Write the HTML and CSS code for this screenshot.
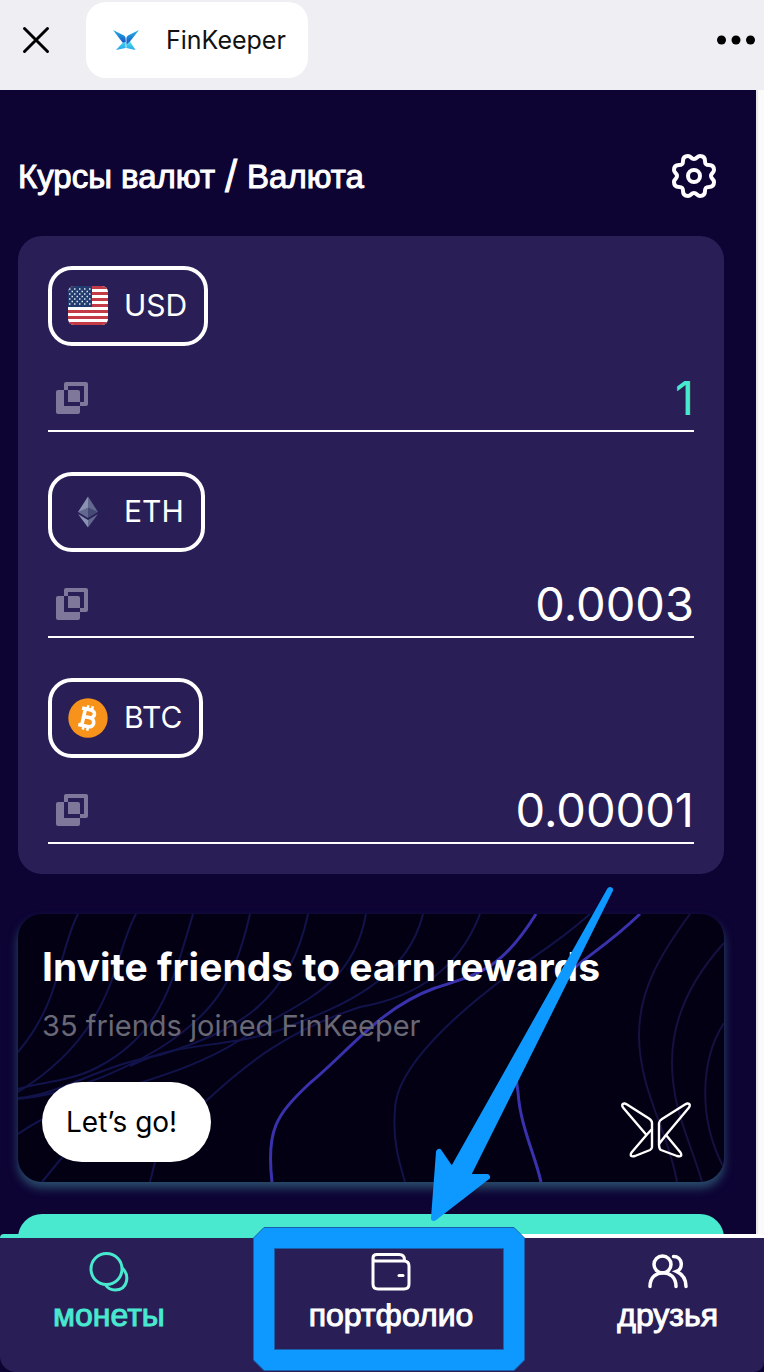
FILE: index.html
```html
<!DOCTYPE html>
<html lang="ru">
<head>
<meta charset="utf-8">
<meta name="viewport" content="width=device-width, initial-scale=1">
<title>FinKeeper</title>
<link rel="stylesheet" href="styles.css">
</head>
<body>
<svg width="0" height="0" class="defs" aria-hidden="true">
  <defs>
    <linearGradient id="wing-top" x1="0" y1="0" x2="0" y2="1">
      <stop offset="0" stop-color="#25b4ea"/><stop offset="1" stop-color="#1756c4"/>
    </linearGradient>
    <linearGradient id="wing-bottom" x1="0" y1="0" x2="0" y2="1">
      <stop offset="0" stop-color="#4fe3f2"/><stop offset="1" stop-color="#25a3ea"/>
    </linearGradient>
    <symbol id="copy" viewBox="0 0 32 32">
      <path fill-rule="evenodd" d="M10 0H30a2 2 0 0 1 2 2V22a2 2 0 0 1-2 2H24V20H28V4H12V8H8V2a2 2 0 0 1 2-2Z"/>
      <path d="M2 8H8V24H24V30a2 2 0 0 1-2 2H2a2 2 0 0 1-2-2V10a2 2 0 0 1 2-2Z"/>
      <path d="M12 8H22a2 2 0 0 1 2 2V20H12Z"/>
    </symbol>
  </defs>
</svg>

<div class="app">
  <header class="topbar">
    <button class="icon-button" type="button" aria-label="Close">
      <svg width="28" height="28" viewBox="0 0 28 28" fill="none" stroke="#000" stroke-width="3" stroke-linecap="round"><path d="M2.500 2.500 25.500 25.500M25.500 2.500 2.500 25.500"/></svg>
    </button>
    <button class="app-tab" type="button">
      <svg width="28" height="22" viewBox="0 0 28 22" aria-hidden="true">
        <path fill="url(#wing-bottom)" d="M13.600 10.500V19L4 21Z"/>
        <path fill="url(#wing-bottom)" d="M14.400 15 18 12.500 23.500 21 14.400 19Z"/>
        <path fill="url(#wing-top)" d="M1 1 12 6.500Q13.600 7.500 13.600 9V13L10.500 13.500Z"/>
        <path fill="url(#wing-top)" d="M27 1 16 6.500Q14.400 7.500 14.400 9V15.500L18 12.500Z"/>
      </svg>
      <span>FinKeeper</span>
    </button>
    <button class="icon-button more" type="button" aria-label="More">
      <svg width="38" height="10" viewBox="0 0 38 10"><circle cx="4.500" cy="5" r="4.500"/><circle cx="19" cy="5" r="4.500"/><circle cx="33.500" cy="5" r="4.500"/></svg>
    </button>
  </header>

  <main class="screen">
    <div class="heading">
      <h1>Курсы валют <span class="slash">/</span> Валюта</h1>
      <button class="icon-button" type="button" aria-label="Настройки">
        <svg width="44" height="44" viewBox="-22 -22 44 44" fill="none" stroke="#fff" stroke-width="4" stroke-linejoin="round">
          <circle r="6"/>
          <path d="M0-17C3-17 3-20 6-20C10-20 11-18 11-15C11-12 12-11 15-11C18-11 20-10 20-6C20-3 17-3 17 0C17 3 20 3 20 6C20 10 18 11 15 11C12 11 11 12 11 15C11 18 10 20 6 20C3 20 3 17 0 17C-3 17-3 20-6 20C-10 20-11 18-11 15C-11 12-12 11-15 11C-18 11-20 10-20 6C-20 3-17 3-17 0C-17-3-20-3-20-6C-20-10-18-11-15-11C-12-11-11-12-11-15C-11-18-10-20-6-20C-3-20-3-17 0-17Z"/>
        </svg>
      </button>
    </div>

    <section class="rates">
      <div class="rate">
        <button class="coin" type="button">
          <svg width="40" height="40" viewBox="0 0 40 40" aria-hidden="true">
            <clipPath id="flag"><rect width="40" height="39" rx="6"/></clipPath>
            <g clip-path="url(#flag)">
              <rect width="40" height="39" fill="#fff"/>
              <path stroke="#c23b46" stroke-width="3" d="M0 1.500H40M0 7.500H40M0 13.500H40M0 19.500H40M0 25.500H40M0 31.500H40M0 37.500H40"/>
              <rect width="24" height="21" fill="#223c70"/>
              <path stroke="#dfe6ee" stroke-width="1.500" stroke-dasharray="1.500 3.500" d="M1 3H23M1 8H23M1 13H23M1 18H23M3.500 5.500H23M3.500 10.500H23M3.500 15.500H23"/>
            </g>
          </svg>
          <span>USD</span>
        </button>
        <div class="amount">
          <button class="copy" type="button" aria-label="Copy USD"><svg width="32" height="32"><use href="#copy"/></svg></button>
          <input class="value active" type="text" value="1" aria-label="USD">
        </div>
      </div>
      <div class="rate">
        <button class="coin" type="button">
          <svg width="40" height="40" viewBox="0 0 40 40" aria-hidden="true">
            <path fill="#8a92b2" d="M20 4.500V20.500L10 20Z"/><path fill="#62688f" d="M20 4.500V20.500L30 20Z"/>
            <path fill="#62688f" d="M20 15.500V26L10 20Z"/><path fill="#454a75" d="M20 15.500V26L30 20Z"/>
            <path fill="#8a92b2" d="M10 22 20 28V35.500Z"/><path fill="#62688f" d="M30 22 20 28V35.500Z"/>
          </svg>
          <span>ETH</span>
        </button>
        <div class="amount">
          <button class="copy" type="button" aria-label="Copy ETH"><svg width="32" height="32"><use href="#copy"/></svg></button>
          <input class="value" type="text" value="0.0003" aria-label="ETH">
        </div>
      </div>
      <div class="rate">
        <button class="coin" type="button">
          <svg width="40" height="40" viewBox="0 0 40 40" aria-hidden="true">
            <circle cx="20" cy="20" r="19.700" fill="#f7931a"/>
            <g transform="rotate(13 20 20)" fill="none" stroke="#fff">
              <path stroke-width="3.600" d="M15.500 11.500V28.500M12 11.500H21C27 11.500 27 19.300 21 19.300H16M21 19.300C28.500 19.300 28.500 28.500 21.500 28.500H12"/>
              <path stroke-width="2.600" d="M17.500 7.500V12M22 7.500V12M17.500 28V32.500M22 28V32.500"/>
            </g>
          </svg>
          <span>BTC</span>
        </button>
        <div class="amount">
          <button class="copy" type="button" aria-label="Copy BTC"><svg width="32" height="32"><use href="#copy"/></svg></button>
          <input class="value" type="text" value="0.00001" aria-label="BTC">
        </div>
      </div>
    </section>

    <section class="invite">
      <svg class="waves" viewBox="18 914 706 268" preserveAspectRatio="none" fill="none" aria-hidden="true">
        <g stroke="#12134a" stroke-width="2">
          <path d="M78 914C58 952 62 1000 18 1052"/>
          <path d="M136 914C112 956 118 1030 18 1092"/>
          <path d="M193 914C172 985 160 1035 98 1067C70 1082 40 1082 18 1089"/>
          <path d="M250 914C236 975 220 1010 160 1048C110 1078 60 1095 18 1099"/>
          <path d="M308 914C290 1000 240 1030 160 1055C100 1065 60 1095 18 1098"/>
          <path d="M366 914C352 990 300 1000 240 1040C170 1085 80 1090 18 1134"/>
          <path d="M423 914C406 985 330 1010 280 1030C220 1050 180 1040 130 1066"/>
          <path d="M480 914C455 980 400 1000 360 1007C290 1030 250 1060 205 1102C150 1130 130 1090 60 1160L42 1182"/>
          <path d="M590 914C555 945 535 955 515 970C460 1010 395 1067 395 1110C392 1140 400 1165 405 1182"/>
          <path d="M155 1162L150 1182"/>
        </g>
        <g stroke="#171041" stroke-width="2">
          <path d="M690 914C660 955 639 990 639 1035C639 1090 668 1130 677 1182"/>
          <path d="M724 943C695 975 672 1015 672 1062C672 1110 690 1140 702 1182"/>
          <path d="M724 1023C700 1060 698 1120 724 1168"/>
        </g>
        <g stroke="#3a32ad" stroke-width="3">
          <path d="M536 914C500 972 475 975 435 988C380 1008 350 1050 310 1083C276 1115 266 1130 272 1182"/>
          <path d="M640 914C590 962 570 960 545 1005C510 1060 515 1070 518 1092C520 1125 535 1155 541 1182"/>
        </g>
      </svg>
      <div class="invite-body">
        <h2>Invite friends to earn rewards</h2>
        <p>35 friends joined FinKeeper</p>
        <div class="invite-foot">
          <button class="go" type="button">Let’s go!</button>
          <svg width="72" height="56" viewBox="0 0 72 56" fill="none" stroke="#fff" stroke-width="2.400" stroke-linejoin="round" aria-hidden="true">
            <path d="M4 1.500Q1 2 3 5.500L26.500 33 32 27V21Q32 18.500 29 16.500L7 2.500Q5 1.300 4 1.500Z"/>
            <path d="M32 27V45Q32 47 30 48L15 54Q9 55.500 11.500 50.500L26.500 33"/>
            <path d="M68 1.500Q71 2 69 5.500L46 33 39 42V21Q39 19 42 17L65 2.500Q67 1.300 68 1.500Z"/>
            <path d="M39 42Q39 47 41 48L57 54Q63 55.500 60.500 50.500L46 33"/>
          </svg>
        </div>
      </div>
    </section>

    <div class="promo"></div>
  </main>

  <nav class="tabbar">
    <a class="tab current" href="#coins">
      <svg width="40" height="40" viewBox="0 0 40 40" fill="none" stroke="currentColor" stroke-width="3" aria-hidden="true">
        <circle cx="17.500" cy="17" r="15.500"/><path d="M33 16C41 23 39 38 26 38C22 38 19 36.500 16.500 33"/>
      </svg>
      <span>монеты</span>
    </a>
    <a class="tab" href="#portfolio">
      <svg width="40" height="40" viewBox="0 0 40 40" fill="none" stroke="currentColor" stroke-width="3" stroke-linecap="round" aria-hidden="true">
        <path d="M2 6V32Q2 37 7 37H33Q38 37 38 32V14Q38 9 33 9H5Q2 9 2 6Q2 2.500 6 2.500H28Q33.500 2.500 33.500 8"/><path d="M28 23.500H32"/>
      </svg>
      <span>портфолио</span>
      <svg class="pointer" width="460" height="492" viewBox="161 880 460 492" fill="#0d99ff" aria-hidden="true">
        <path fill-rule="evenodd" stroke="#1a5fae" stroke-width="1" d="M264 1227.500H514L524.500 1238V1360L514 1370.500H264L253.500 1360V1238ZM274.500 1248.500V1349.500H503.500V1248.500Z"/>
        <path stroke="#0d99ff" stroke-width="6" stroke-linejoin="round" d="M610 890 452 1171 439 1152 434 1218 487 1177 467 1177Z"/>
      </svg>
    </a>
    <a class="tab" href="#friends">
      <svg width="40" height="40" viewBox="0 0 40 40" fill="none" stroke="currentColor" stroke-width="3.500" stroke-linecap="round" aria-hidden="true">
        <circle cx="14.500" cy="12.500" r="8.500"/><path d="M2 34.500C2 16 28 16 28 34.500"/><path d="M25.500 4.500C35 4.500 35.500 17 28.500 19.500C34 22 38 27 38 34.500"/>
      </svg>
      <span>друзья</span>
    </a>
  </nav>
</div>
</body>
</html>
```
FILE: styles.css
```css
* { box-sizing: border-box; }

body {
  margin: 0;
  background: #0d0434;
  color: #fff;
  font-family: "Liberation Sans", sans-serif;
}

button {
  font: inherit;
  border: 0;
  padding: 0;
  background: none;
  color: inherit;
  cursor: pointer;
}

svg { display: block; flex: none; }
.defs { position: absolute; }

.app {
  display: flex;
  flex-direction: column;
  height: 100vh;
}

.topbar {
  flex: none;
  display: flex;
  align-items: flex-start;
  height: 90px;
  padding: 2px 9px 0 22px;
  background: #efeef3;
}
.topbar .icon-button {
  display: flex;
  align-items: center;
  height: 76px;
}
.topbar .more { margin-left: auto; }

.app-tab {
  display: flex;
  align-items: center;
  gap: 26px;
  height: 76px;
  margin-left: 36px;
  padding: 0 22px 0 26px;
  border-radius: 20px;
  background: #fff;
  color: #111;
  font-family: Inter, sans-serif;
  font-size: 25px;
}

.screen {
  flex: 1;
  min-height: 0;
  overflow-y: auto;
  scrollbar-width: none;
  padding: 64px 34px 0 18px;
  border-right: 6px solid #fafafa;
  box-shadow: inset -2px 0 #e8e8ea;
}

.heading {
  display: flex;
  align-items: center;
  justify-content: space-between;
  height: 44px;
  padding-right: 8px;
}
.heading h1 {
  margin: 0;
  padding-bottom: 2px;
  font-size: 33px;
  line-height: 40px;
  font-weight: 400;
  -webkit-text-stroke: 1px #fff;
}
.slash {
  font-family: Inter, sans-serif;
  font-size: 38px;
}

.rates {
  display: grid;
  grid-template-columns: minmax(0, 1fr);
  gap: 40px;
  margin-top: 38px;
  padding: 30px;
  border-radius: 24px;
  background: #291f56;
}

.coin {
  display: inline-flex;
  align-items: center;
  gap: 16px;
  height: 80px;
  padding: 0 17px 2px 16px;
  border: 4px solid #fff;
  border-radius: 24px;
  font-family: Inter, sans-serif;
  font-size: 30px;
}
.coin svg { margin-top: 2px; }

.amount {
  display: flex;
  align-items: center;
  height: 86px;
  padding: 20px 0 0 8px;
  border-bottom: 2px solid #fff;
}
.copy { fill: #7f789a; }
.value {
  flex: 1;
  min-width: 0;
  width: 100%;
  padding: 0;
  border: 0;
  outline: 0;
  background: none;
  color: #fff;
  font-family: Inter, sans-serif;
  font-size: 47px;
  line-height: 60px;
  text-align: right;
}
.value.active { color: #48e9cf; }

.invite {
  position: relative;
  margin-top: 40px;
  border-radius: 24px;
  background: #030014;
  box-shadow: 0 6px 10px #2a4d6c;
}
.waves {
  position: absolute;
  inset: 0;
  width: 100%;
  height: 100%;
  border-radius: 24px;
}
.invite-body {
  position: relative;
  padding: 28px 32px 20px 24px;
  font-family: Inter, sans-serif;
}
.invite h2 {
  margin: 0;
  font-size: 39px;
  line-height: 50px;
  font-weight: 700;
}
.invite p {
  margin: 12px 0 0;
  color: #696875;
  font-size: 29px;
  line-height: 44px;
}
.invite-foot {
  display: flex;
  align-items: center;
  justify-content: space-between;
  margin-top: 34px;
}
.invite-foot svg { margin-top: 16px; }
.go {
  height: 80px;
  padding: 0 34px 0 24px;
  border-radius: 40px;
  background: #fff;
  color: #000;
  font-size: 28px;
}

.promo {
  height: 120px;
  margin-top: 32px;
  border-radius: 24px;
  background: #48e9cf;
}

.tabbar {
  flex: none;
  display: flex;
  justify-content: space-between;
  height: 138px;
  padding: 0 46px 0 53px;
  border-radius: 4px 0 10px 16px;
  background:
    linear-gradient(to right, #48e9cf 50%, #fff 50%) top / 100% 4px no-repeat,
    #291f56;
}
.tab {
  position: relative;
  display: flex;
  flex-direction: column;
  align-items: center;
  gap: 5px;
  padding-top: 18px;
  color: #fff;
  font-size: 32px;
  line-height: 36px;
  text-decoration: none;
  -webkit-text-stroke: 1px currentColor;
}
.tab.current { color: #48e9cf; }

.pointer {
  position: absolute;
  bottom: 0;
  left: 50%;
  margin-left: -230px;
  pointer-events: none;
}
```
